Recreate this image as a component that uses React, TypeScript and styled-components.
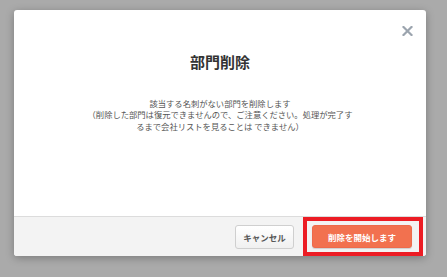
import styled, { createGlobalStyle } from "styled-components";

const GlobalStyle = createGlobalStyle`
  html, body {
    margin: 0;
    padding: 0;
    background: #aaaaaa;
  }
  body {
    font-family: "Noto Sans CJK JP", "Noto Sans", sans-serif;
  }
`;

const Overlay = styled.div`
  width: 447px;
  height: 277px;
  padding: 10px 0 0 14px;
  box-sizing: border-box;
  background: #aaaaaa;
`;

const Modal = styled.div`
  position: relative;
  display: flex;
  flex-direction: column;
  width: 412px;
  height: 246px;
  background: #ffffff;
  border-radius: 3px;
  box-shadow: 0 2px 8px rgba(0, 0, 0, 0.28);
  overflow: visible;
`;

const CloseButton = styled.button`
  position: absolute;
  top: 14px;
  right: 12px;
  width: 14px;
  height: 14px;
  padding: 0;
  border: none;
  background: none;
  display: flex;
  align-items: center;
  justify-content: center;
  cursor: pointer;
`;

const Body = styled.div`
  flex: 1;
  display: flex;
  flex-direction: column;
  align-items: center;
  padding-top: 42px;
`;

const Title = styled.h2`
  margin: 0;
  font-size: 15px;
  line-height: 20px;
  font-weight: 700;
  color: #333333;
`;

const Message = styled.p`
  margin: 26px 0 0;
  font-size: 8.3px;
  line-height: 11.3px;
  color: #555555;
  text-align: center;
  white-space: nowrap;
`;

const Footer = styled.div`
  height: 39px;
  display: flex;
  align-items: center;
  justify-content: flex-end;
  gap: 18px;
  padding: 0 14px;
  background: #f3f3f3;
  border-top: 1px solid #dcdcdc;
  border-radius: 0 0 3px 3px;
`;

const Button = styled.button<{ $primary?: boolean }>`
  height: ${({ $primary }) => ($primary ? "23px" : "24px")};
  padding: 0;
  width: ${({ $primary }) => ($primary ? "100px" : "59px")};
  border-radius: 3px;
  font-family: "Noto Sans CJK JP", sans-serif;
  font-size: 8.5px;
  font-weight: 700;
  cursor: pointer;
  border: 1px solid ${({ $primary }) => ($primary ? "#ee6a4b" : "#cfcfcf")};
  background: ${({ $primary }) =>
    $primary ? "#f2714f" : "linear-gradient(#ffffff, #f0f0f0)"};
  color: ${({ $primary }) => ($primary ? "#ffffff" : "#555555")};
  box-shadow: ${({ $primary }) =>
    $primary ? "0 1px 1px rgba(0,0,0,0.15)" : "none"};
`;

const Highlighted = styled.div`
  position: relative;
  display: flex;
`;

const HighlightFrame = styled.div`
  position: absolute;
  top: -8px;
  left: -9px;
  right: -11px;
  bottom: -8px;
  border: 4px solid #ec1c24;
  pointer-events: none;
`;

const App = () => {
  return (
    <>
      <GlobalStyle />
      <Overlay>
        <Modal>
          <CloseButton aria-label="close">
            <svg width="11" height="10" viewBox="0 0 11 10">
              <path
                d="M1.5 1 L9.5 9 M9.5 1 L1.5 9"
                stroke="#9ba4ae"
                strokeWidth="2.2"
                strokeLinecap="square"
              />
            </svg>
          </CloseButton>
          <Body>
            <Title>部門削除</Title>
            <Message>
              該当する名刺がない部門を削除します
              <br />
              （削除した部門は復元できませんので、ご注意ください。処理が完了す
              <br />
              るまで会社リストを見ることは できません）
            </Message>
          </Body>
          <Footer>
            <Button>キャンセル</Button>
            <Highlighted>
              <Button $primary>削除を開始します</Button>
              <HighlightFrame />
            </Highlighted>
          </Footer>
        </Modal>
      </Overlay>
    </>
  );
};

export default App;
